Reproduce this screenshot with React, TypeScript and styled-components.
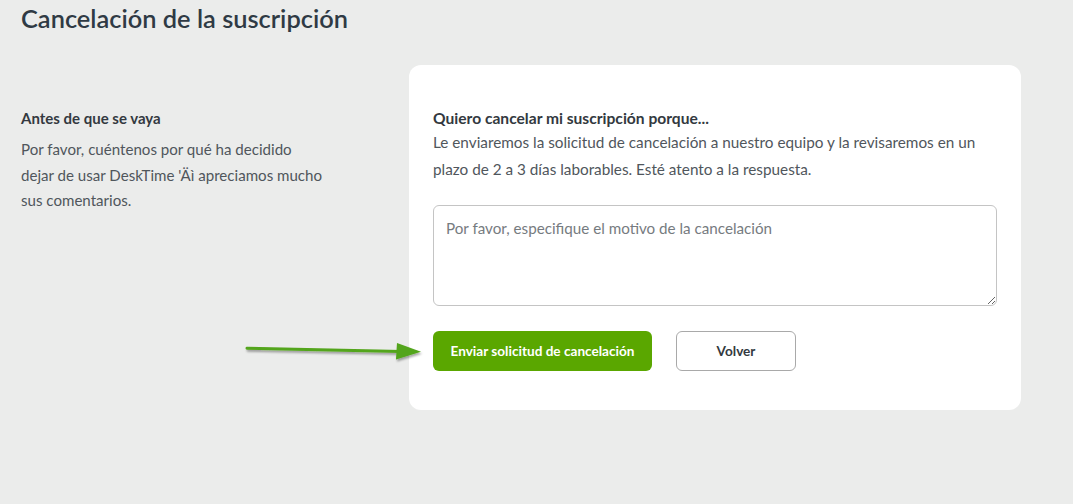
import React from "react";
import styled, { createGlobalStyle } from "styled-components";

const Global = createGlobalStyle`
  html, body { margin: 0; padding: 0; background: #ebeceb; }
  body { font-family: Lato, "Noto Sans", sans-serif; }
  * { box-sizing: border-box; }
`;

const Page = styled.div`
  padding: 0 21px;
  min-height: 504px;
`;

const Title = styled.h1`
  margin: 0;
  padding-top: 2px;
  font-size: 25.4px;
  line-height: 32px;
  font-weight: 600;
  color: #2f3a44;
`;

const Layout = styled.div`
  display: grid;
  grid-template-columns: 388px 612px;
  margin-top: 31px;
`;

const Aside = styled.div`
  padding-top: 42px;
  width: 305px;
`;

const Heading = styled.div<{ $size?: number }>`
  font-size: ${(p) => p.$size ?? 15}px;
  font-weight: 700;
  line-height: 22px;
  color: #333940;
`;

const AsideText = styled.p`
  margin: 8px 0 0;
  font-size: 15.1px;
  line-height: 25.5px;
  color: #50565c;
`;

const Card = styled.div`
  background: #fff;
  border-radius: 12px;
  padding: 42px 24px 39px;
`;

const CardText = styled.p`
  margin: 0;
  max-width: 552px;
  font-size: 15.3px;
  line-height: 27px;
  color: #50565c;
`;

const Textarea = styled.textarea`
  display: block;
  width: 564px;
  height: 101px;
  margin-top: 22px;
  border: 1px solid #c4c4c4;
  border-radius: 6px;
  padding: 11px 12px;
  font-family: Lato, "Noto Sans", sans-serif;
  font-size: 15.2px;
  line-height: 22px;
  color: #333;
  resize: vertical;
  &::placeholder { color: #767b80; }
`;

const ButtonRow = styled.div`
  position: relative;
  display: flex;
  gap: 24px;
  margin-top: 25px;
`;

const Button = styled.button<{ $primary?: boolean }>`
  height: 40px;
  border-radius: 6px;
  font-family: Lato, "Noto Sans", sans-serif;
  font-size: 13.6px;
  font-weight: 700;
  cursor: pointer;
  ${(p) =>
    p.$primary
      ? `background: #5aa700; color: #fff; border: none; width: 219px;`
      : `background: #fff; color: #333940; border: 1px solid #a9a9a9; width: 120px;`}
`;

const Arrow = styled.svg`
  position: absolute;
  left: -190px;
  top: 6px;
  overflow: visible;
`;

export default function App() {
  return (
    <Page>
      <Global />
      <Title>Cancelación de la suscripción</Title>
      <Layout>
        <Aside>
          <Heading>Antes de que se vaya</Heading>
          <AsideText>
            Por favor, cuéntenos por qué ha decidido dejar de usar DeskTime 'Äì apreciamos mucho sus comentarios.
          </AsideText>
        </Aside>
        <Card>
          <Heading $size={15.6}>Quiero cancelar mi suscripción porque...</Heading>
          <CardText>
            Le enviaremos la solicitud de cancelación a nuestro equipo y la revisaremos en un plazo de 2 a 3 días laborables. Esté atento a la respuesta.
          </CardText>
          <Textarea placeholder="Por favor, especifique el motivo de la cancelación" />
          <ButtonRow>
            <Button $primary>Enviar solicitud de cancelación</Button>
            <Button>Volver</Button>
            <Arrow width="180" height="24" viewBox="0 0 180 24">
              <defs>
                <filter id="sh" x="-10%" y="-50%" width="120%" height="200%">
                  <feDropShadow dx="1" dy="2" stdDeviation="1.2" floodColor="#000" floodOpacity="0.35" />
                </filter>
              </defs>
              <g filter="url(#sh)">
                <path d="M4 11.2 L158 14.4" stroke="#53a51b" strokeWidth="3" strokeLinecap="round" />
                <path d="M154 6 L178 14.8 L153 22.5 Z" fill="#53a51b" />
              </g>
            </Arrow>
          </ButtonRow>
        </Card>
      </Layout>
    </Page>
  );
}
